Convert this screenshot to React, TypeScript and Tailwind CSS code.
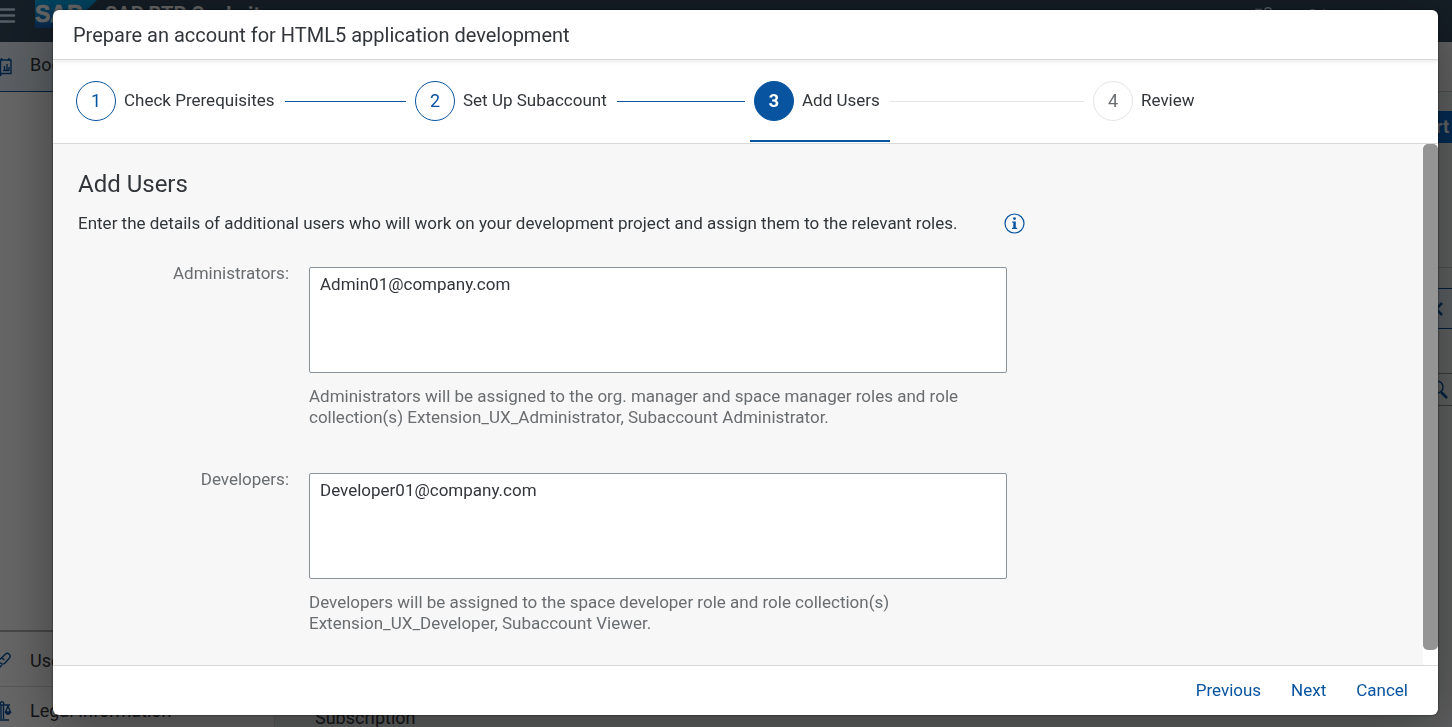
import React from 'react';

const STEPS = [
  { n: 1, label: 'Check Prerequisites', state: 'done' },
  { n: 2, label: 'Set Up Subaccount', state: 'done' },
  { n: 3, label: 'Add Users', state: 'current' },
  { n: 4, label: 'Review', state: 'upcoming' },
];

const CIRCLE: Record<string, string> = {
  done: 'border-[#0854a0] bg-white text-[#0854a0]',
  current: 'border-[#0854a0] bg-[#0854a0] font-bold text-white',
  upcoming: 'border-[#e5e5e5] bg-white text-[#6a6d70]',
};

function SapLogo() {
  return (
    <svg className="h-7 w-[62px] shrink-0" viewBox="0 0 62 28" role="img" aria-label="SAP">
      <defs>
        <linearGradient id="sap" x1="0" y1="0" x2="0" y2="1">
          <stop offset="0" stopColor="#00aeef" />
          <stop offset="0.6" stopColor="#0f86dc" />
          <stop offset="1" stopColor="#1d61bc" />
        </linearGradient>
      </defs>
      <path d="M0 0H62L34 28H0Z" fill="url(#sap)" />
      <text x="0" y="22" fill="#fff" stroke="#fff" strokeWidth="0.6" fontFamily="Liberation Sans, Arial, sans-serif" fontWeight="700" fontSize="23">
        SAP
      </text>
    </svg>
  );
}

function BoosterIcon() {
  return (
    <svg className="h-5 w-5 shrink-0" viewBox="0 0 20 20" fill="none" stroke="#0854a0" strokeWidth="1.400" aria-hidden="true">
      <path d="M1 3H19V16.500H9.500L8.500 18.500H6.500M9.500 1V4M17 1V4M8.500 4V18M12.500 9V14M15 7V14M17 10V14M11 13.500H17" />
    </svg>
  );
}

function LinkIcon() {
  return (
    <svg className="h-5 w-5 shrink-0" viewBox="0 0 20 20" fill="none" stroke="#0854a0" strokeWidth="1.400" strokeLinecap="round" aria-hidden="true">
      <path d="M8.500 8L13.500 3C16 1 19.500 4.500 17.500 7L13 12C11.500 13.500 9.500 13 8.500 12M12 8.500C10.500 7 8.500 7 7 8.500L2.500 13.500C1 16 4 19.500 6.500 17.500L9.500 14.500" />
    </svg>
  );
}

function ScaleIcon() {
  return (
    <svg className="h-5 w-5 shrink-0" viewBox="0 0 20 20" fill="none" stroke="#0854a0" strokeWidth="1.400" aria-hidden="true">
      <circle cx="10" cy="2.500" r="1.800" />
      <path d="M1 4H8M12 4H18M9 4.500V18M11.500 4.500V18M6 19H17M16 5L13.500 11H18.500ZM4 5L1.500 11H6.500Z" />
      <path d="M13 11H19C18.500 15 13.500 15 13 11Z" fill="#0854a0" stroke="none" />
    </svg>
  );
}

function CockpitPage() {
  return (
    <div className="flex h-dvh flex-col overflow-hidden bg-[#edeff0]" aria-hidden="true">
      <header className="flex h-[42px] shrink-0 items-start bg-[#354a5f] text-white">
        <svg className="mt-2 h-4 w-4 shrink-0" viewBox="0 0 16 16" aria-hidden="true">
          <path d="M-2 1.500H14M-2 7.500H14M-2 13.500H14" stroke="#d1e8ff" strokeWidth="2.500" strokeLinecap="round" />
        </svg>
        <div className="ml-[19px] flex flex-1 items-start gap-2">
          <SapLogo />
          <span className="text-xl leading-7 font-bold">SAP BTP Cockpit</span>
        </div>
        <div className="mr-[126px] flex gap-8 pt-1 text-base leading-6 text-[#d1e8ff]">
          <svg className="mt-[3px] h-4 w-5" viewBox="0 0 20 16" fill="none" stroke="#d1e8ff" strokeWidth="1.500" aria-hidden="true">
            <path d="M0 2.500H7M0 6H5M8 16C8 8 18 8 18 16" />
            <circle cx="13" cy="4" r="3.300" />
          </svg>
          <span>Sti</span>
        </div>
      </header>
      <div className="flex min-h-0 flex-1">
        <aside className="flex w-[275px] shrink-0 flex-col border-r border-[#d9d9d9] bg-white text-lg text-[#32363a]">
          <div className="flex h-[50px] items-center gap-[18px] border-b border-[#0854a0] bg-[#e5f0fa] pb-1 pl-3">
            <span className="-ml-5 flex pt-1"><BoosterIcon /></span>
            Boosters
          </div>
          <div className="flex-1" />
          <div className="flex h-14 items-center gap-[18px] border-t-2 border-[#b0b0b0] pt-1 pl-3">
            <span className="-ml-5 flex"><LinkIcon /></span>
            Useful Links
          </div>
          <div className="flex h-[41px] items-start gap-[18px] border-t border-[#d9d9d9] pt-[10px] pl-3">
            <span className="-ml-5 flex pt-1"><ScaleIcon /></span>
            Legal Information
          </div>
        </aside>
        <main className="flex min-w-0 flex-1 flex-col items-end">
          <div className="h-[50px] w-full border-b border-[#c5c5c5] bg-[#f5f5f5]" />
          <div className="mt-[19px] flex h-8 w-20 items-center justify-end bg-[#0a6ed1] pr-[3px] text-lg font-bold text-white">
            Start
          </div>
          <div className="mt-[124px] w-full border-t border-[#c5c5c5]" />
          <div className="mt-5 flex h-[41px] w-20 items-center justify-end border-y border-[#0854a0] bg-[#e5f0fa] pr-2">
            <svg className="h-4 w-4" viewBox="0 0 16 16" fill="none" stroke="#0854a0" strokeWidth="2.500">
              <path d="M14 2L8 8L14 14" />
            </svg>
          </div>
          <div className="mt-11 flex h-[33px] w-20 items-center justify-end border-y border-[#89919a] pr-1">
            <svg className="h-5 w-5" viewBox="0 0 20 20" fill="none" stroke="#0854a0">
              <circle cx="9" cy="7" r="6" strokeWidth="1.500" />
              <path d="M13 12L19 18" strokeWidth="2.500" />
            </svg>
          </div>
          <div className="mt-auto w-full pl-10 text-lg leading-[18px] text-[#32363a]">Subscription</div>
        </main>
      </div>
    </div>
  );
}

function Stepper() {
  return (
    <nav aria-label="Progress" className="h-[84px] shrink-0 border-b border-[#d9d9d9] pr-[10px] pl-[19px]">
      <ol className="flex">
        {STEPS.map((s, i) => (
          <li key={s.n} className="flex min-w-0 flex-1 items-center">
            <a
              href={`#step-${s.n}`}
              aria-current={s.state === 'current' ? 'step' : undefined}
              className={`flex h-[82px] shrink-0 items-center gap-2 border-b-2 pt-0.5 pr-[10px] pl-1 ${
                s.state === 'current' ? 'border-[#0854a0]' : 'border-transparent'
              }`}
            >
              <span className={`flex size-10 items-center justify-center rounded-full border text-lg ${CIRCLE[s.state]}`}>
                {s.n}
              </span>
              <span>{s.label}</span>
            </a>
            {i < STEPS.length - 1 && (
              <span className={`mr-[5px] h-px flex-1 ${s.state === 'done' ? 'bg-[#0854a0]' : 'bg-[#e5e5e5]'}`} />
            )}
          </li>
        ))}
      </ol>
    </nav>
  );
}

function UserField({ id, label, value, hint }: { id: string; label: string; value: string; hint: string }) {
  return (
    <div className="grid grid-cols-[211px_minmax(0,698px)] gap-x-5">
      <label htmlFor={id} className="text-right leading-3 text-[#6a6d70]">
        {label}
      </label>
      <div>
        <textarea
          id={id}
          aria-describedby={`${id}-hint`}
          defaultValue={value}
          className="block h-[106px] w-full resize-none rounded-xs border border-[#89919a] bg-white px-[10px] py-[5px] leading-[22px] outline-none"
        />
        <p id={`${id}-hint`} className="mt-[13px] leading-[21px] text-[#6a6d70]">
          {hint}
        </p>
      </div>
    </div>
  );
}

export default function App() {
  return (
    <div className="font-[Roboto,sans-serif]">
      <CockpitPage />
      <div className="fixed inset-0 bg-black/60 pt-[10px] pr-[14px] pb-3 pl-[53px]">
        <section
          role="dialog"
          aria-modal="true"
          aria-labelledby="dialog-title"
          className="flex h-full flex-col overflow-hidden rounded-md bg-white text-[17px] text-[#32363a] shadow-[0_0_2px_rgba(0,0,0,0.8),0_10px_60px_rgba(0,0,0,0.4)]"
        >
          <header className="z-10 flex h-[50px] shrink-0 items-center border-b border-[#d9d9d9] px-5 shadow-[0_2px_4px_rgba(0,0,0,0.08)]">
            <h1 id="dialog-title" className="text-xl">
              Prepare an account for HTML5 application development
            </h1>
          </header>
          <Stepper />
          <div className="flex min-h-0 flex-1">
            <div className="min-w-0 flex-1 overflow-hidden bg-[#f7f7f7] pt-6 pl-[25px]">
              <h2 className="text-2xl leading-8">Add Users</h2>
              <div className="mt-[11px] flex items-center gap-[47px] leading-6">
                <p>
                  Enter the details of additional users who will work on your development project and assign them to the relevant
                  roles.
                </p>
                <button type="button" aria-label="More information" className="flex shrink-0">
                  <svg className="size-[21px]" viewBox="0 0 21 21" aria-hidden="true">
                    <circle cx="10.500" cy="10.500" r="9.500" fill="none" stroke="#0854a0" strokeWidth="1.200" />
                    <circle cx="10.500" cy="5.600" r="1.400" fill="#0854a0" />
                    <path d="M8 8.500H11.800V14.800H13.200V16H8V14.800H9.300V9.600H8Z" fill="#0854a0" />
                  </svg>
                </button>
              </div>
              <form className="mt-8 flex flex-col gap-[45px]">
                <UserField
                  id="administrators"
                  label="Administrators:"
                  value="Admin01@company.com"
                  hint="Administrators will be assigned to the org. manager and space manager roles and role collection(s) Extension_UX_Administrator, Subaccount Administrator."
                />
                <UserField
                  id="developers"
                  label="Developers:"
                  value="Developer01@company.com"
                  hint="Developers will be assigned to the space developer role and role collection(s) Extension_UX_Developer, Subaccount Viewer."
                />
              </form>
            </div>
            <div className="w-[15px] shrink-0 bg-white pb-[15px]">
              <div className="h-full rounded-[5px] bg-[#949494]" />
            </div>
          </div>
          <footer className="flex h-[50px] shrink-0 items-center justify-end gap-[30px] border-t border-[#d9d9d9] pr-[30px] text-[#0854a0]">
            <button type="button">Previous</button>
            <button type="button">Next</button>
            <button type="button">Cancel</button>
          </footer>
        </section>
      </div>
    </div>
  );
}
